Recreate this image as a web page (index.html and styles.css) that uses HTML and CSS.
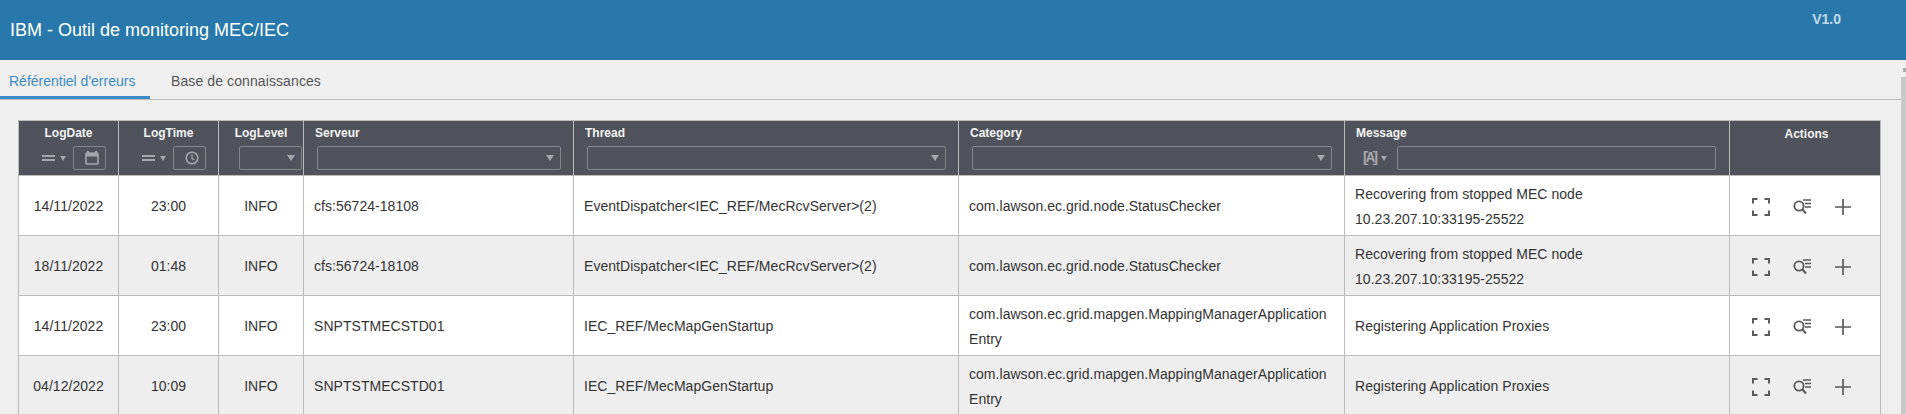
FILE: index.html
```html
<!DOCTYPE html>
<html lang="fr">
<head>
<meta charset="utf-8">
<title>IBM - Outil de monitoring MEC/IEC</title>
<link rel="stylesheet" href="styles.css">
</head>
<body>
<svg class="sprite" width="0" height="0" aria-hidden="true">
  <symbol id="i-full" viewBox="0 0 18 18"><path d="M1 5.500V1h4.500M12.500 1H17v4.500M17 12.500V17h-4.500M5.500 17H1v-4.500" fill="none" stroke="currentColor" stroke-width="2"/></symbol>
  <symbol id="i-find" viewBox="0 0 18 18"><circle cx="6" cy="8" r="4.6" fill="none" stroke="currentColor" stroke-width="1.8"/><path d="M9 11l4 4.5" stroke="currentColor" stroke-width="2" fill="none"/><path d="M10 2h8M12 5.500h6M12 9h6" stroke="currentColor" stroke-width="1.600" fill="none"/></symbol>
  <symbol id="i-plus" viewBox="0 0 18 18"><path d="M9 1v16M1 9h16" stroke="currentColor" stroke-width="1.700" fill="none"/></symbol>
</svg>
<header class="topbar">
  <h1 class="app-title">IBM - Outil de monitoring MEC/IEC</h1>
  <span class="version">V1.0</span>
</header>
<nav class="tabs">
  <a class="tab tab-active">Référentiel d'erreurs</a>
  <a class="tab">Base de connaissances</a>
</nav>
<main class="content">
  <table class="grid">
    <colgroup>
      <col class="c-date"><col class="c-time"><col class="c-level"><col class="c-server"><col class="c-thread"><col class="c-cat"><col class="c-msg"><col class="c-act">
    </colgroup>
    <thead>
      <tr>
        <th class="th-center"><div class="label">LogDate</div>
          <div class="filter filter-end"><span class="eq"></span><span class="caret"></span>
            <span class="box box-icon"><svg class="ficon" viewBox="0 0 14 14"><path d="M3 0v2M11 0v2" stroke="currentColor" stroke-width="2"/><rect x="1" y="2" width="12" height="11" rx="1" fill="none" stroke="currentColor" stroke-width="1.600"/><rect x="1" y="2" width="12" height="3.500" fill="currentColor"/></svg></span></div></th>
        <th class="th-center"><div class="label">LogTime</div>
          <div class="filter filter-end"><span class="eq"></span><span class="caret"></span>
            <span class="box box-icon"><svg class="ficon" viewBox="0 0 14 14"><circle cx="7" cy="7" r="5.800" fill="none" stroke="currentColor" stroke-width="1.500"/><path d="M7 3.500V7.500L9.500 9" fill="none" stroke="currentColor" stroke-width="1.300"/></svg></span></div></th>
        <th class="th-center"><div class="label">LogLevel</div>
          <div class="filter filter-level"><span class="box box-select"><span class="caret caret-lg"></span></span></div></th>
        <th><div class="label">Serveur</div>
          <div class="filter filter-wide"><span class="box box-select box-grow"><span class="caret caret-lg"></span></span></div></th>
        <th><div class="label">Thread</div>
          <div class="filter filter-wide"><span class="box box-select box-grow"><span class="caret caret-lg"></span></span></div></th>
        <th><div class="label">Category</div>
          <div class="filter filter-wide"><span class="box box-select box-grow"><span class="caret caret-lg"></span></span></div></th>
        <th><div class="label">Message</div>
          <div class="filter filter-msg"><span class="regex">[A]</span><span class="caret caret-sm"></span><span class="box box-grow"></span></div></th>
        <th class="th-center th-actions"><div class="label">Actions</div></th>
      </tr>
    </thead>
    <tbody>
      <tr>
        <td class="center">14/11/2022</td><td class="center">23:00</td><td class="center">INFO</td>
        <td>cfs:56724-18108</td><td>EventDispatcher&lt;IEC_REF/MecRcvServer&gt;(2)</td>
        <td>com.lawson.ec.grid.node.StatusChecker</td>
        <td>Recovering from stopped MEC node<br>10.23.207.10:33195-25522</td>
        <td class="actions"><div class="action-row"><svg class="aicon"><use href="#i-full"/></svg><svg class="aicon"><use href="#i-find"/></svg><svg class="aicon"><use href="#i-plus"/></svg></div></td>
      </tr>
      <tr>
        <td class="center">18/11/2022</td><td class="center">01:48</td><td class="center">INFO</td>
        <td>cfs:56724-18108</td><td>EventDispatcher&lt;IEC_REF/MecRcvServer&gt;(2)</td>
        <td>com.lawson.ec.grid.node.StatusChecker</td>
        <td>Recovering from stopped MEC node<br>10.23.207.10:33195-25522</td>
        <td class="actions"><div class="action-row"><svg class="aicon"><use href="#i-full"/></svg><svg class="aicon"><use href="#i-find"/></svg><svg class="aicon"><use href="#i-plus"/></svg></div></td>
      </tr>
      <tr>
        <td class="center">14/11/2022</td><td class="center">23:00</td><td class="center">INFO</td>
        <td>SNPTSTMECSTD01</td><td>IEC_REF/MecMapGenStartup</td>
        <td>com.lawson.ec.grid.mapgen.MappingManagerApplication<br>Entry</td>
        <td>Registering Application Proxies</td>
        <td class="actions"><div class="action-row"><svg class="aicon"><use href="#i-full"/></svg><svg class="aicon"><use href="#i-find"/></svg><svg class="aicon"><use href="#i-plus"/></svg></div></td>
      </tr>
      <tr>
        <td class="center">04/12/2022</td><td class="center">10:09</td><td class="center">INFO</td>
        <td>SNPTSTMECSTD01</td><td>IEC_REF/MecMapGenStartup</td>
        <td>com.lawson.ec.grid.mapgen.MappingManagerApplication<br>Entry</td>
        <td>Registering Application Proxies</td>
        <td class="actions"><div class="action-row"><svg class="aicon"><use href="#i-full"/></svg><svg class="aicon"><use href="#i-find"/></svg><svg class="aicon"><use href="#i-plus"/></svg></div></td>
      </tr>
    </tbody>
  </table>
</main>
<div class="scrollbar"><span class="scroll-arrow"></span><span class="scroll-thumb"></span></div>
</body>
</html>
```
FILE: styles.css
```css
* { box-sizing: border-box; }
html, body { height: 100%; }
body {
  margin: 0;
  height: 414px;
  overflow: hidden;
  background: #efefef;
  color: #333;
  font-family: "Liberation Sans", Arial, sans-serif;
  font-size: 14px;
}
.sprite { position: absolute; }

.topbar {
  height: 60px;
  background: #2878ab;
  display: flex;
  justify-content: space-between;
  padding: 0 65px 0 10px;
}
.app-title {
  margin: 0;
  font-size: 18px;
  font-weight: 400;
  line-height: 60px;
  color: #fff;
}
.version {
  margin-top: 11px;
  font-size: 14px;
  font-weight: 700;
  line-height: 16px;
  color: #c3d8e6;
}

.tabs {
  height: 40px;
  display: flex;
  border-bottom: 1px solid #bbb;
}
.tab {
  height: 39px;
  padding: 12px 0 0 9px;
  width: 162px;
  color: #555;
  line-height: 18px;
  letter-spacing: .1px;
}
.tab-active {
  width: 150px;
  margin-right: 12px;
  color: #3d8bc4;
  border-bottom: 3px solid #3d8bc4;
  letter-spacing: 0;
}

.content { padding: 20px 0 0 18px; }

.grid {
  width: 1863px;
  table-layout: fixed;
  border-collapse: collapse;
}
.c-date, .c-time { width: 100px; }
.c-level { width: 85px; }
.c-server { width: 270px; }
.c-thread { width: 385px; }
.c-cat { width: 386px; }
.c-msg { width: 385px; }
.c-act { width: 151px; }

th {
  height: 55px;
  padding: 0;
  background: #50535c;
  border: 1px solid #bbb;
  border-bottom: 0;
  color: #f2f2f2;
  font-size: 12px;
  font-weight: 700;
  text-align: left;
  vertical-align: top;
}
.label {
  padding: 5px 0 0 11px;
  height: 25px;
  line-height: 15px;
}
.th-center { text-align: center; }
.th-center .label { padding-left: 0; }
.th-actions .label { padding: 6px 0 0 3px; }

.filter {
  display: flex;
  align-items: center;
  height: 24px;
}
.filter-end { justify-content: flex-end; padding-right: 12px; }
.filter-level { padding: 0 1px 0 20px; }
.filter-wide { padding: 0 12px 0 13px; }
.filter-msg { padding: 0 13px 0 16px; }

.box {
  display: flex;
  align-items: center;
  justify-content: flex-end;
  height: 24px;
  border: 1px solid #83868d;
  border-radius: 2px;
  color: #a5a7ac;
}
.box-icon { width: 33px; margin-left: 7px; padding-right: 6px; }
.box-select { width: 100%; padding-right: 6px; }
.box-grow { flex: 1; }

.eq {
  width: 13px;
  height: 6px;
  border-top: 2px solid #a5a7ac;
  border-bottom: 2px solid #a5a7ac;
  margin-right: 5px;
}
.caret {
  width: 0;
  height: 0;
  border-left: 3.500px solid transparent;
  border-right: 3.500px solid transparent;
  border-top: 5px solid #a5a7ac;
}
.caret-lg {
  border-left-width: 4.500px;
  border-right-width: 4.500px;
  border-top-width: 6px;
}
.caret-sm { margin: 0 10px 0 6px; }
.ficon { width: 14px; height: 14px; }
.regex {
  width: 14px;
  color: #a5a7ac;
  font-family: "Liberation Mono", monospace;
  font-size: 15px;
  font-weight: 700;
  letter-spacing: -4px;
  white-space: nowrap;
}

td {
  height: 60px;
  padding: 2px 10px 0;
  border: 1px solid #bbb;
  color: #333;
  font-size: 14px;
  line-height: 25px;
  letter-spacing: .04px;
  white-space: nowrap;
}
tbody tr:nth-child(odd) td { background: #fff; }
tbody tr:nth-child(even) td { background: #eee; }
td.center { text-align: center; }
td.actions { padding: 2px 0 0 22px; }
.action-row { display: flex; gap: 23px; color: #5a5a5a; }
.aicon { width: 18px; height: 18px; }

.scrollbar {
  position: absolute;
  top: 60px;
  right: 0;
  width: 5px;
  height: 354px;
  background: #efefef;
  display: flex;
  flex-direction: column;
}
.scroll-arrow {
  margin: 8px 0 0 2px;
  width: 3px;
  height: 4px;
  background: #aaa;
}
.scroll-thumb {
  flex: 1;
  margin-top: 5px;
  background: #c8c8c8;
}
```
